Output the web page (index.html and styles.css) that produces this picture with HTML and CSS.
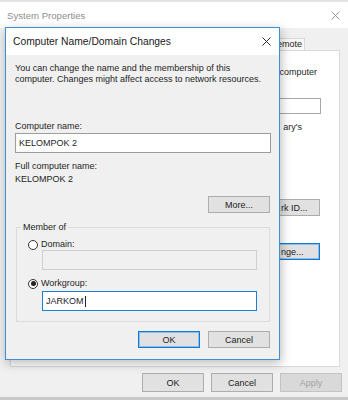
FILE: index.html
```html
<!DOCTYPE html>
<html>
<head>
<meta charset="utf-8">
<link rel="stylesheet" href="styles.css">
</head>
<body>
<div class="topstrip"></div>
<div class="win">
  <div class="win-title">
    <span class="win-title-text">System Properties</span>
    <svg class="win-close" width="9" height="9" viewBox="0 0 9 9"><path d="M0.5 0.5L8.5 8.5M8.5 0.5L0.5 8.5" stroke="#9a9a9a" stroke-width="1"/></svg>
  </div>
  <div class="win-body">
    <div class="tabs">
      <div class="tab">emote</div>
    </div>
    <div class="panel">
      <div class="p-line p-line1">computer</div>
      <div class="p-input"></div>
      <div class="p-line p-line2">ary's</div>
      <div class="btn p-btn p-btn1">rk ID...</div>
      <div class="btn btn-default p-btn p-btn2">nge...</div>
    </div>
    <div class="win-buttons">
      <div class="btn wbtn">OK</div>
      <div class="btn wbtn">Cancel</div>
      <div class="btn wbtn btn-disabled">Apply</div>
    </div>
  </div>
</div>

<div class="dlg">
  <div class="dlg-title">
    <span class="dlg-title-text">Computer Name/Domain Changes</span>
    <svg class="dlg-close" width="9" height="9" viewBox="0 0 9 9"><path d="M0.5 0.5L8.5 8.5M8.5 0.5L0.5 8.5" stroke="#2a2a2a" stroke-width="1"/></svg>
  </div>
  <div class="dlg-body">
    <div class="desc">You can change the name and the membership of this<br>computer. Changes might affect access to network resources.</div>
    <div class="label lbl-name">Computer name:</div>
    <div class="field field-name">KELOMPOK 2</div>
    <div class="label lbl-full">Full computer name:</div>
    <div class="label full-value">KELOMPOK 2</div>
    <div class="more-row"><div class="btn dbtn">More...</div></div>
    <fieldset class="group">
      <legend class="legend">Member of</legend>
      <div class="radio-row row-domain"><span class="radio"></span><span>Domain:</span></div>
      <div class="field field-sub field-disabled"></div>
      <div class="radio-row row-work"><span class="radio radio-on"></span><span>Workgroup:</span></div>
      <div class="field field-sub field-focus">JARKOM<span class="caret"></span></div>
    </fieldset>
    <div class="dlg-buttons">
      <div class="btn dbtn btn-default">OK</div>
      <div class="btn dbtn">Cancel</div>
    </div>
  </div>
</div>
</body>
</html>
```
FILE: styles.css
```css
html, body {
  margin: 0;
  padding: 0;
}
body {
  width: 348px;
  height: 400px;
  overflow: hidden;
  position: relative;
  background: #c9c9c9;
  font-family: "Liberation Sans", Arial, sans-serif;
  font-size: 9px;
  color: #1e1e1e;
}
.topstrip {
  height: 2px;
  background: #e2e2e2;
}
.win {
  height: 395px;
  display: flex;
  flex-direction: column;
  background: #f0f0f0;
}
.win-title {
  height: 26px;
  background: #ffffff;
  display: flex;
  align-items: center;
  justify-content: space-between;
  padding: 0 8px 0 7px;
}
.win-title-text {
  font-size: 9.6px;
  color: #8f8f8f;
}
.win-body {
  flex: 1;
  display: flex;
  flex-direction: column;
}
.tabs {
  display: flex;
  justify-content: flex-end;
  margin-top: 10px;
  margin-right: 43px;
  height: 12px;
}
.tab {
  height: 11px;
  line-height: 11px;
  padding: 0 2px 0 12px;
  border: 1px solid #d9d9d9;
  border-bottom: none;
  background: #f7f7f7;
  white-space: nowrap;
}
.panel {
  margin: 0 8px 0 10px;
  height: 315px;
  border: 1px solid #d9d9d9;
  background: #ffffff;
  display: flex;
  flex-direction: column;
  align-items: flex-end;
  overflow: hidden;
}
.p-line {
  white-space: nowrap;
  line-height: 12px;
}
.p-line1 {
  margin-top: 15px;
  margin-right: 22px;
}
.p-input {
  margin-top: 20px;
  margin-right: 18px;
  width: 120px;
  height: 14px;
  border: 1px solid #a8a8a8;
  background: #fff;
}
.p-line2 {
  margin-top: 7px;
  margin-right: 37px;
}
.btn {
  box-sizing: border-box;
  background: #e1e1e1;
  border: 1px solid #adadad;
  display: flex;
  align-items: center;
  justify-content: center;
  color: #222;
  white-space: nowrap;
}
.btn-default {
  border-color: #1479d2;
  box-shadow: inset 0 0 0 1px #8dbde9;
}
.btn-disabled {
  color: #a3a3a3;
  border-color: #c3c3c3;
  background: #d9d9d9;
}
.p-btn {
  width: 62px;
  height: 17px;
  margin-right: 19px;
  justify-content: flex-start;
  padding-left: 22px;
}
.p-btn1 {
  margin-top: 66px;
}
.p-btn2 {
  margin-top: 27px;
}
.win-buttons {
  display: flex;
  justify-content: flex-end;
  gap: 7px;
  padding-right: 6px;
  margin-top: 6px;
}
.wbtn {
  width: 62px;
  height: 19px;
}

/* dialog window overlay */
.dlg {
  position: absolute;
  left: 5px;
  top: 27px;
  width: 275px;
  height: 333px;
  box-sizing: border-box;
  border: 1px solid #3d8fd6;
  background: #f0f0f0;
  box-shadow: 1px 3px 10px rgba(0, 0, 0, 0.28);
  display: flex;
  flex-direction: column;
}
.dlg-title {
  height: 27px;
  flex: none;
  background: #ffffff;
  display: flex;
  align-items: center;
  justify-content: space-between;
  padding: 0 8px 0 7px;
}
.dlg-title-text {
  font-size: 10.3px;
  color: #1a1a1a;
}
.dlg-body {
  padding: 0 8px 0 9px;
  display: flex;
  flex-direction: column;
}
.desc {
  margin-top: 8px;
  line-height: 11px;
  white-space: nowrap;
}
.label {
  line-height: 11px;
}
.lbl-name {
  margin-top: 36px;
}
.field {
  box-sizing: border-box;
  height: 20px;
  border: 1px solid #9c9c9c;
  background: #ffffff;
  display: flex;
  align-items: center;
  padding-left: 3px;
}
.field-name {
  margin-top: 1px;
}
.lbl-full {
  margin-top: 8px;
}
.full-value {
  margin-top: 2px;
}
.more-row {
  display: flex;
  justify-content: flex-end;
  margin-top: 11px;
  padding-right: 1px;
}
.dbtn {
  width: 62px;
  height: 17px;
}
.group {
  margin: 9px 1px 0 1px;
  border: 1px solid #dcdcdc;
  padding: 6px 12px 10px 11px;
}
.legend {
  padding: 0 2px;
  margin-left: -7px;
  line-height: 11px;
}
.radio-row {
  display: flex;
  align-items: center;
  gap: 3px;
  line-height: 11px;
}
.radio {
  box-sizing: border-box;
  width: 10px;
  height: 10px;
  border: 1px solid #333;
  border-radius: 50%;
  background: #fff;
  display: flex;
  align-items: center;
  justify-content: center;
}
.radio-on::after {
  content: "";
  width: 5px;
  height: 5px;
  border-radius: 50%;
  background: #222;
}
.field-sub {
  margin-left: 14px;
}
.field-disabled {
  margin-top: 0;
  border-color: #cfcfcf;
  background: #f0f0f0;
}
.row-work {
  margin-top: 8px;
}
.field-focus {
  margin-top: 2px;
  border-color: #1a7fd6;
}
.caret {
  width: 1px;
  height: 11px;
  background: #222;
  margin-left: 1px;
}
.dlg-buttons {
  display: flex;
  justify-content: flex-end;
  gap: 8px;
  margin-top: 9px;
  padding-right: 1px;
}
```
